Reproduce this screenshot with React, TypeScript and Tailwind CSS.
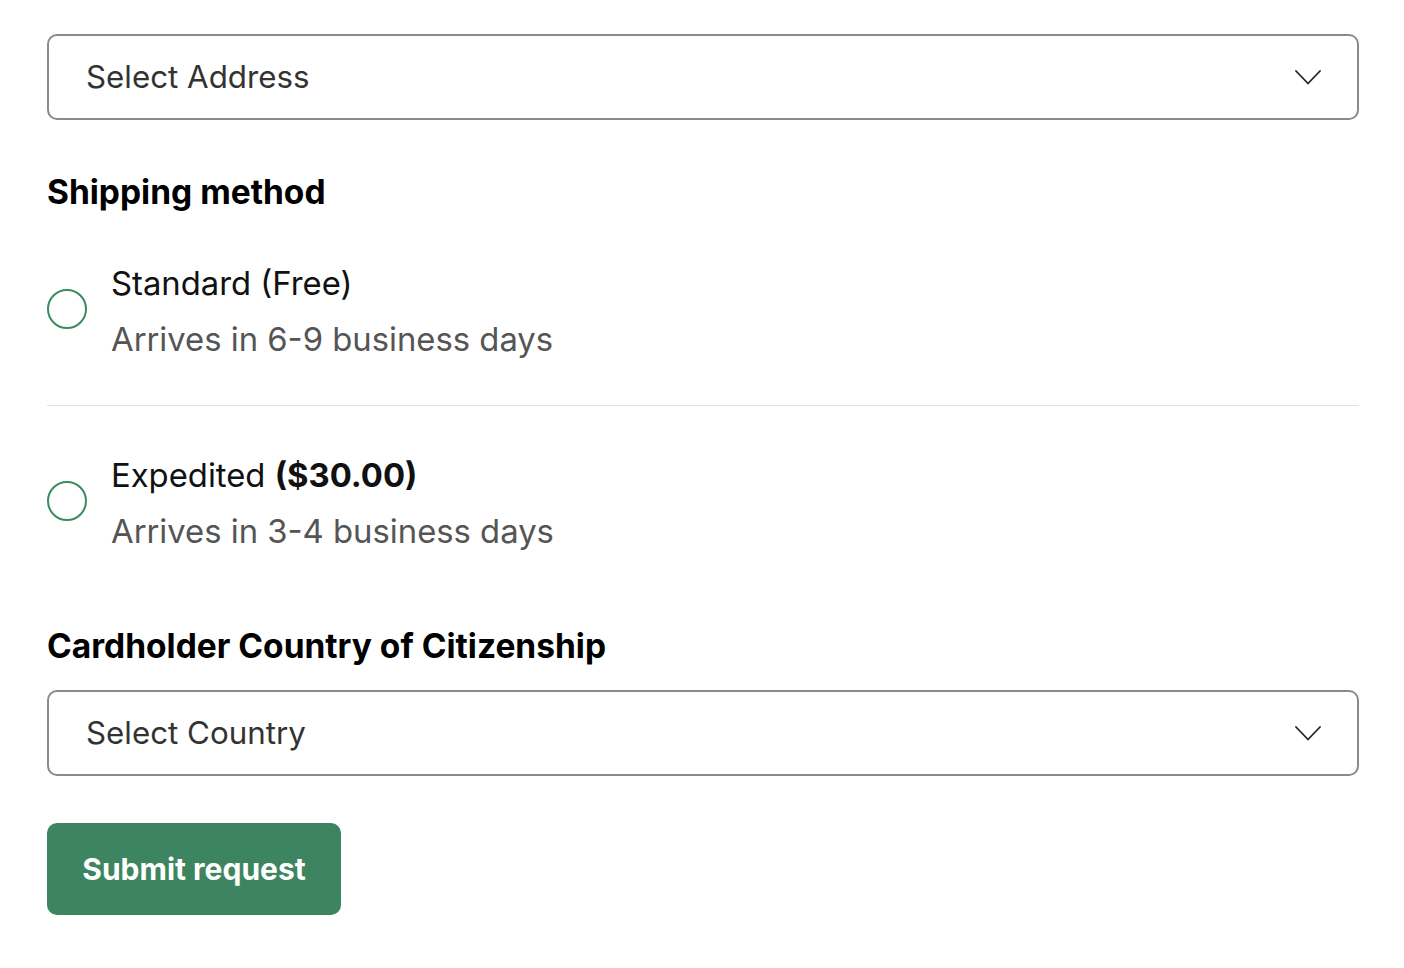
import React from "react";

function Chevron() {
  return (
    <svg width="26" height="17" viewBox="0 0 26 17" fill="none" className="shrink-0">
      <path d="M1 2 L13 14.5 L25 2" stroke="#222" strokeWidth="1.8" strokeLinecap="round" strokeLinejoin="round" />
    </svg>
  );
}

function SelectBox({ label }: { label: string }) {
  return (
    <div className="flex h-[86px] items-center justify-between rounded-[10px] border-2 border-[#8a8a8a] pl-[37px] pr-[36px]">
      <span className="text-[31.3px] text-[#333]">{label}</span>
      <Chevron />
    </div>
  );
}

function ShippingOption({
  title,
  price,
  note,
  bold,
  last,
}: {
  title: string;
  price: string;
  note: string;
  bold?: boolean;
  last?: boolean;
}) {
  return (
    <div className={`flex items-center gap-[24px] ${last ? "pt-[41px]" : "pt-[43px] pb-[38px] border-b border-[#e2e2e2]"}`}>
      <div className="-mt-[4px] h-[40px] w-[40px] shrink-0 rounded-full border-2 border-[#3b8a62]" />
      <div className="flex flex-col">
        <div className="h-[56px] text-[32.8px] leading-[56px] text-[#111]">
          {title} {bold ? <span className="font-bold">{price}</span> : price}
        </div>
        <div className="h-[56px] text-[32.8px] leading-[56px] text-[#555]">{note}</div>
      </div>
    </div>
  );
}

export default function App() {
  return (
    <div
      className="min-h-screen bg-white pl-[47px] pr-[45px] pt-[34px]"
      style={{ fontFamily: "Inter, 'Noto Sans', sans-serif" }}
    >
      <SelectBox label="Select Address" />

      <h2 className="mt-[52px] text-[33.5px] font-bold leading-[40px] text-black">Shipping method</h2>

      <div className="flex flex-col">
        <ShippingOption title="Standard" price="(Free)" note="Arrives in 6-9 business days" />
        <ShippingOption title="Expedited" price="($30.00)" note="Arrives in 3-4 business days" bold last />
      </div>

      <h2 className="mt-[67px] text-[33.5px] font-bold leading-[40px] text-black">
        Cardholder Country of Citizenship
      </h2>

      <div className="mt-[24px]">
        <SelectBox label="Select Country" />
      </div>

      <button className="mt-[47px] h-[92px] w-[294px] rounded-[10px] bg-[#3c8560] text-[30px] font-bold text-white">
        Submit request
      </button>
    </div>
  );
}
